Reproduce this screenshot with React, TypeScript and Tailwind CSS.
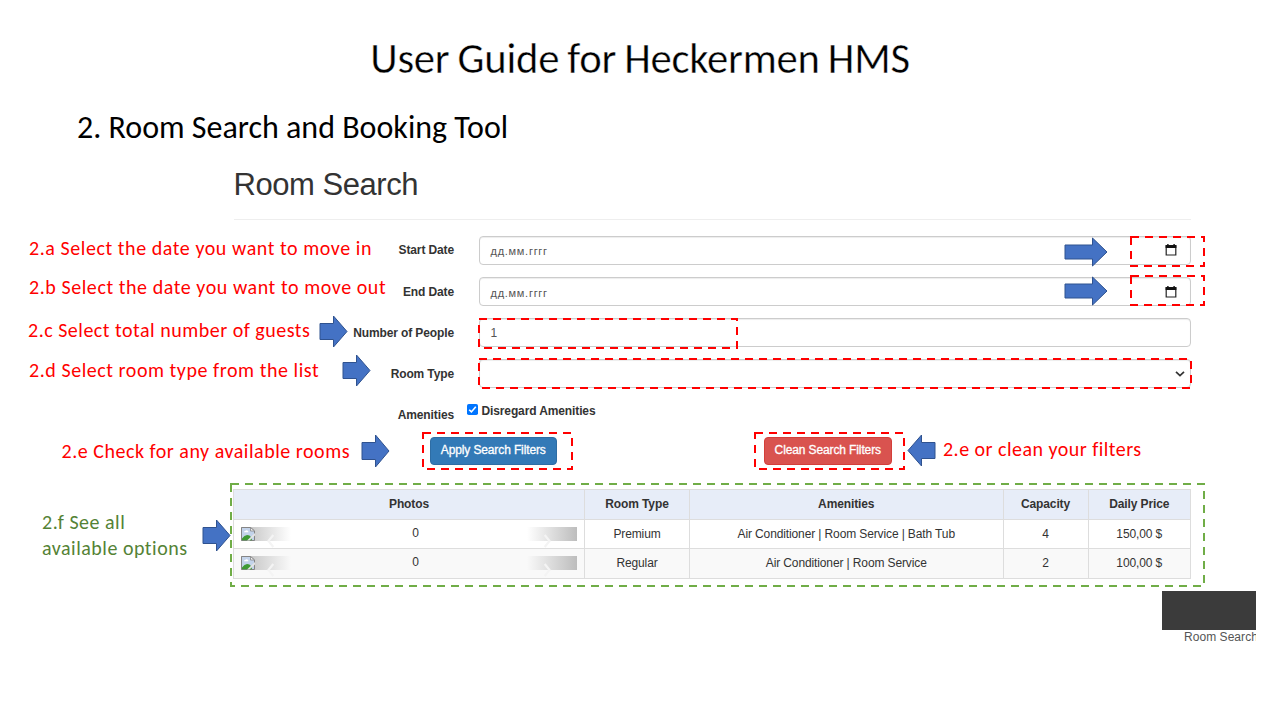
import type { ReactNode } from "react";

const cx = (...parts: string[]) => parts.join(" ");

/* ---------- Annotation pieces laid over the slide ---------- */

function Arrow({ className = "", w = 27, h = 31, head = 13.5, inset = 7.5 }: { className?: string; w?: number; h?: number; head?: number; inset?: number }) {
  const x = w - head;
  return (
    <svg className={cx("shrink-0 overflow-visible", className)} width={w} height={h} viewBox={`0 0 ${w} ${h}`}>
      <path
        d={`M0 ${inset}H${x}V0L${w} ${h / 2}L${x} ${h}V${h - inset}H0Z`}
        fill="#4472c4"
        stroke="#2f528f"
        strokeWidth="1"
      />
    </svg>
  );
}

function DashedBox({ className, w, h, color = "#ff0000" }: { className: string; w: number; h: number; color?: string }) {
  return (
    <svg className={cx("absolute overflow-visible", className)} width={w} height={h} viewBox={`0 0 ${w} ${h}`}>
      <path d={`M0 0H${w}V${h}H0Z`} fill="none" stroke={color} strokeWidth="2" strokeDasharray="8 6" />
    </svg>
  );
}

/* ---------- Form pieces ---------- */

function CalendarIcon() {
  return (
    <svg width="12" height="12" viewBox="0 0 12 12">
      <path d="M1.2 1.6H10.8V11H1.2Z" fill="none" stroke="#222" strokeWidth="1.2" />
      <path d="M.6 1.2H11.4V4H.6ZM2.2 0H3.6V2H2.2ZM8.4 0H9.8V2H8.4Z" fill="#111" />
    </svg>
  );
}

function Row({ label, children }: { label: string; children: ReactNode }) {
  return (
    <div className="flex h-[28.6px] items-center">
      <div className="w-[220.5px] shrink-0 text-right font-bold text-[#333]">{label}</div>
      {children}
    </div>
  );
}

function Field({ children }: { children?: ReactNode }) {
  return (
    <div className="ml-[25px] flex h-full w-[712px] items-center justify-between rounded-[4px] border border-[#ccc] pl-[10.5px] text-[#555] shadow-[inset_0_1px_1px_rgba(0,0,0,0.075)]">
      {children}
    </div>
  );
}

function DateField() {
  return (
    <Field>
      <span className="pt-[2px] text-[11px] tracking-[0.72px]">дд.мм.гггг</span>
      <span className="mr-[13.5px]">
        <CalendarIcon />
      </span>
    </Field>
  );
}

/* ---------- Results table ---------- */

function BrokenImage() {
  return (
    <svg width="14" height="14" viewBox="0 0 14 14">
      <path d="M.5 .5H9.5L13.5 4V13.5H.5Z" fill="#c3d3ea" stroke="#858585" />
      <path d="M9.5 .5V4H13.5Z" fill="#f1f1f1" stroke="#858585" strokeWidth=".8" />
      <path d="M3 5.2Q3 4 4.3 4Q5 2.6 6.3 3.6Q7.6 3.8 7.3 5.2Z" fill="#fff" />
      <path d="M1 13.2V11.5Q4 7 7.5 8.2Q10.5 9 11 13.2Z" fill="#3f9a35" />
      <path d="M14 6L6 13.5H8.5L14 8.6Z" fill="#e4e4e4" />
    </svg>
  );
}

function Carousel() {
  return (
    <div className="flex h-[14px] items-start justify-between">
      <div className="flex h-full w-[50px] bg-linear-to-r from-[#bdbdbd] to-transparent">
        <BrokenImage />
        <svg className="ml-[12px] mt-[7px] shrink-0" width="8" height="14" viewBox="0 0 8 14">
          <path d="M6.3 1L1.5 7L6.3 13" fill="none" stroke="#f4f4f4" strokeWidth="2.2" />
        </svg>
      </div>
      <span className="pl-[13px] text-[12px] leading-[13px]">0</span>
      <div className="flex h-full w-[50px] bg-linear-to-l from-[#bdbdbd] to-transparent">
        <svg className="ml-[16px] mt-[7px] shrink-0" width="8" height="14" viewBox="0 0 8 14">
          <path d="M1.7 1L6.5 7L1.7 13" fill="none" stroke="#f4f4f4" strokeWidth="2.2" />
        </svg>
      </div>
    </div>
  );
}

const rooms = [
  { type: "Premium", amenities: "Air Conditioner | Room Service | Bath Tub", capacity: "4", price: "150,00 $" },
  { type: "Regular", amenities: "Air Conditioner | Room Service", capacity: "2", price: "100,00 $" },
];

const cell = "border border-[#ddd] p-0 text-center";

function Results() {
  return (
    <table className="-ml-[0.5px] mt-[24.2px] w-[957px] table-fixed border-collapse text-[#333]">
      <colgroup>
        <col className="w-[351px]" />
        <col className="w-[105px]" />
        <col className="w-[313.5px]" />
        <col className="w-[85px]" />
        <col className="w-[102.5px]" />
      </colgroup>
      <thead>
        <tr className="h-[29.5px] bg-[#e7edf8]">
          {["Photos", "Room Type", "Amenities", "Capacity", "Daily Price"].map((h) => (
            <th key={h} className={cx(cell, "font-bold")}>{h}</th>
          ))}
        </tr>
      </thead>
      <tbody>
        {rooms.map((r) => (
          <tr key={r.type} className="h-[29.5px] even:bg-[#f9f9f9]">
            <td className={cx(cell, "px-[7px]!")}><Carousel /></td>
            <td className={cell}>{r.type}</td>
            <td className={cell}>{r.amenities}</td>
            <td className={cell}>{r.capacity}</td>
            <td className={cell}>{r.price}</td>
          </tr>
        ))}
      </tbody>
    </table>
  );
}

const button = "flex h-[28.4px] items-center justify-center rounded-[4px] border pb-[2px] text-white [-webkit-text-stroke:0.3px_#fff]";
const note = "whitespace-nowrap font-['Carlito','Lato',sans-serif] text-[20px] leading-6 text-[#ff0000]";
const noteRow = "flex h-6 items-center justify-between";

export default function App() {
  return (
    <main className="relative h-[720px] w-[1280px] overflow-hidden bg-white">
      <h1 className="pt-[28px] text-center font-['Carlito','Lato',sans-serif] text-[42.67px] leading-[60px] tracking-[-0.25px] text-black [word-spacing:-1.2px] [-webkit-text-stroke:0.35px_#fff]">
        User Guide for Heckermen HMS
      </h1>
      <h2 className="mt-[20px] pl-[77px] font-['Carlito','Lato',sans-serif] text-[32px] leading-10 text-black">
        2. Room Search and Booking Tool
      </h2>

      <section className="ml-[233.5px] mt-[17px] w-[957.5px] font-['Liberation_Sans',Arial,sans-serif] text-[12px] leading-4 tracking-[-0.12px]">
        <h3 className="text-[31px] leading-10 tracking-[-0.45px] text-[#333]">Room Search</h3>
        <hr className="mt-[14px] border-[#eee]" />

        <div className="mt-[16.2px] flex flex-col gap-[12.5px]">
          <Row label="Start Date"><DateField /></Row>
          <Row label="End Date"><DateField /></Row>
          <Row label="Number of People"><Field>1</Field></Row>
          <Row label="Room Type">
            <Field>
              <span />
              <svg className="mr-[5px]" width="10" height="6" viewBox="0 0 10 6">
                <path d="M1 .8L5 4.6L9 .8" fill="none" stroke="#333" strokeWidth="1.7" />
              </svg>
            </Field>
          </Row>
          <Row label="Amenities">
            <div className="mb-[8px] ml-[12.7px] flex items-center font-bold text-[#333]">
              <svg className="-mt-[2px] mr-[3.8px]" width="11" height="11" viewBox="0 0 11 11">
                <rect width="11" height="11" rx="1.8" fill="#0075ff" />
                <path d="M2.2 5.7L4.4 7.9L8.8 2.8" fill="none" stroke="#fff" strokeWidth="1.6" />
              </svg>
              Disregard Amenities
            </div>
          </Row>
        </div>

        <div className="mt-[7.4px] flex pl-[196px]">
          <div className={cx(button, "w-[127.5px] border-[#2e6da4] bg-[#337ab7]")}>Apply Search Filters</div>
          <div className={cx(button, "ml-[206.5px] w-[128.5px] border-[#d43f3a] bg-[#d9534f]")}>Clean Search Filters</div>
        </div>

        <Results />
      </section>

      <figure className="ml-[1162px] mt-[12px] w-[94px] overflow-hidden font-['Liberation_Sans',Arial,sans-serif]">
        <div className="h-[39px] bg-[#3b3b3b]" />
        <figcaption className="w-[100px] whitespace-nowrap pl-[22px] text-[12px] leading-[14px] tracking-[0.05px] text-[#555]">Room Search</figcaption>
      </figure>

      <aside className={cx("absolute left-7 top-[236px] flex flex-col", note)}>
        <p className="pl-px tracking-[0.56px]">2.a Select the date you want to move in</p>
        <p className="mt-[15px] pl-px tracking-[0.56px]">2.b Select the date you want to move out</p>
        <div className={cx(noteRow, "mt-[19px] w-[318.5px]")}>
          <p className="tracking-[0.5px]">2.c Select total number of guests</p>
          <Arrow className="mt-[3px]" />
        </div>
        <div className={cx(noteRow, "mt-[16px] w-[341.5px] pl-px")}>
          <p className="tracking-[0.55px]">2.d Select room type from the list</p>
          <Arrow className="mt-px" />
        </div>
        <div className={cx(noteRow, "mt-[57px] w-[360.5px] pl-[33.5px]")}>
          <p className="tracking-[0.52px]">2.e Check for any available rooms</p>
          <Arrow h={32} />
        </div>
        <div className="mt-[46px] flex w-[201.5px] items-center justify-between pl-[14px] text-[#548235]">
          <p className="leading-[26px] tracking-[0.5px]">
            2.f See all
            <br />
            available options
          </p>
          <Arrow />
        </div>
      </aside>

      <aside className={cx("absolute left-[907.5px] top-[435px] flex gap-[8.5px]", note)}>
        <Arrow className="rotate-180" />
        <p className="mt-[2px] tracking-[0.47px]">2.e or clean your filters</p>
      </aside>

      <aside className="absolute left-[1064.5px] top-[238px] flex flex-col gap-[11px]">
        <Arrow w={42} h={28} head={14.5} inset={7} />
        <Arrow w={42} h={28} head={14.5} inset={7} />
      </aside>

      <DashedBox className="left-[1131px] top-[237px]" w={73} h={29} />
      <DashedBox className="left-[1131px] top-[276px]" w={73} h={29} />
      <DashedBox className="left-[479px] top-[319px]" w={258} h={29} />
      <DashedBox className="left-[479px] top-[359px]" w={712} h={29} />
      <DashedBox className="left-[423px] top-[433px]" w={149} h={36} />
      <DashedBox className="left-[755px] top-[433px]" w={149} h={36} />
      <DashedBox className="left-[231px] top-[484px]" w={973} h={102} color="#70ad47" />
    </main>
  );
}
